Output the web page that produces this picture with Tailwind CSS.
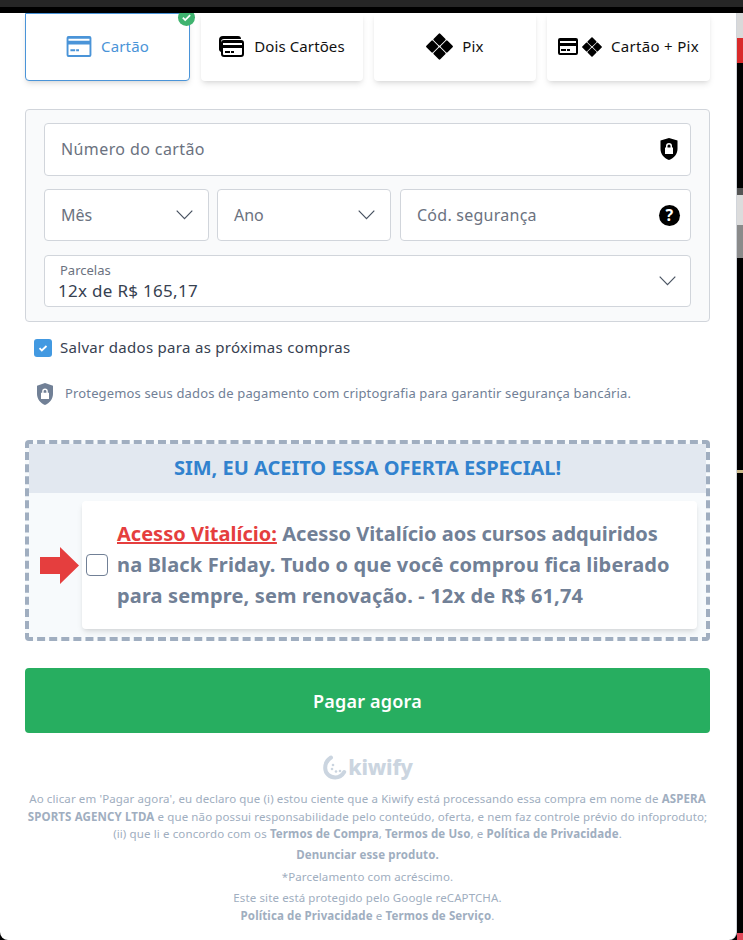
<!DOCTYPE html>
<html lang="pt-BR">
<head>
<meta charset="utf-8">
<script src="https://cdn.jsdelivr.net/npm/@tailwindcss/browser@4"></script>
</head>
<body class="bg-black font-['Noto_Sans','Open_Sans',sans-serif]">
<div class="w-[743px] h-[940px] overflow-hidden flex flex-col">
  <div class="h-[7px] bg-[#262626] shrink-0"></div>
  <div class="h-[6px] bg-black shrink-0"></div>
  <div class="flex flex-1 min-h-0">
    <main class="w-[737px] h-[927px] bg-white rounded-b-lg overflow-hidden px-[25px] relative border-r border-[#d1d5db]">
      <!-- tabs -->
      <div class="flex w-[685px] justify-between">
        <div class="relative w-[165px] h-[68px] pb-[1px] bg-white border border-[#4a94d8] rounded-b flex items-center justify-center gap-[9px] shadow-md text-[#4a94d8] text-[15px] tracking-[0.15px]">
          <svg class="w-[26px] h-[21px]" viewBox="0 0 26 22"><path fill="#4a94d8" fill-rule="evenodd" d="M2 0h22a2 2 0 0 1 2 2v18a2 2 0 0 1-2 2H2a2 2 0 0 1-2-2V2a2 2 0 0 1 2-2zm0 3v2h22V3H2zm0 6v11h22V9H2zm2 5h5v2H4v-2zm6 0h3v2h-3v-2z"/></svg>
          <span>Cartão</span>
          <span class="absolute -top-[5px] -right-[6px] w-[17px] h-[17px] rounded-full bg-[#3fb36f] flex items-center justify-center">
            <svg class="w-[11px] h-[11px]" viewBox="0 0 12 12"><path d="M2 6.200l2.600 2.600L10 3.400" fill="none" stroke="white" stroke-width="2"/></svg>
          </span>
        </div>
        <div class="w-[162px] h-[68px] pb-[1px] bg-white rounded-b flex items-center justify-center gap-[10px] shadow-md text-[#111] text-[15px] tracking-[0.1px]">
          <svg class="w-[25px] h-[21px]" viewBox="0 0 25 21"><path d="M4 0h15a3 3 0 0 1 3 3H5a3 3 0 0 0-3 3v10a3 3 0 0 1-2-3V4a4 4 0 0 1 4-4z" fill="#000"/><path fill-rule="evenodd" fill="#000" d="M5 4h17a3 3 0 0 1 3 3v11a3 3 0 0 1-3 3H5a3 3 0 0 1-3-3V7a3 3 0 0 1 3-3zm-1 3v2h19V7H4zm0 5v6a1 1 0 0 0 1 1h17a1 1 0 0 0 1-1v-6H4zm2 3h5v2H6v-2zm6 0h3v2h-3v-2z"/></svg>
          <span>Dois Cartões</span>
        </div>
        <div class="w-[162px] h-[68px] pb-[1px] bg-white rounded-b flex items-center justify-center gap-[9px] shadow-md text-[#111] text-[15px] tracking-[0.15px]">
          <svg class="w-[27px] h-[27px]" viewBox="0 0 27 27"><path fill="#000" d="M13.500 1.500l5 5-5 5-5-5zM6.200 8.500l5 5-5 5-5-5zM20.800 8.500l5 5-5 5-5-5zM13.500 15.500l5 5-5 5-5-5z" stroke="#000" stroke-width="2.200" stroke-linejoin="round"/></svg>
          <span>Pix</span>
        </div>
        <div class="w-[163px] h-[68px] pb-[1px] bg-white rounded-b flex items-center justify-center shadow-md text-[#111] text-[15px] tracking-[0.3px]">
          <svg class="w-[20px] h-[17px]" viewBox="0 0 20 17"><path fill-rule="evenodd" fill="#000" d="M2 0h16a2 2 0 0 1 2 2v13a2 2 0 0 1-2 2H2a2 2 0 0 1-2-2V2a2 2 0 0 1 2-2zm0 3v2h16V3H2zm0 5v7h16V8H2zm1 3h5v2H3v-2zm6 0h3v2H9v-2z"/></svg>
          <svg class="w-[20px] h-[20px] ml-[4px] mr-[9px]" viewBox="0 0 27 27"><path fill="#000" d="M13.500 1.500l5 5-5 5-5-5zM6.200 8.500l5 5-5 5-5-5zM20.800 8.500l5 5-5 5-5-5zM13.500 15.500l5 5-5 5-5-5z" stroke="#000" stroke-width="2.200" stroke-linejoin="round"/></svg>
          <span>Cartão + Pix</span>
        </div>
      </div>

      <!-- form -->
      <section class="mt-[28px] w-[685px] h-[213px] bg-[#f9fafb] border border-[#d1d5db] rounded pt-[13px] px-[18px] flex flex-col">
        <div class="h-[53px] pb-[2px] bg-white border border-[#d1d5db] rounded flex items-center justify-between pl-[16px] pr-[12px] text-[16px] tracking-[0.4px] text-[#6b7280]">
          <span>Número do cartão</span>
          <svg class="w-[18px] h-[22px]" viewBox="0 0 18 22"><path fill-rule="evenodd" fill="#000" d="M9 0l8.500 2.500V11c0 5-3.500 9-8.500 11C4 20 .5 16 .5 11V2.500zM9 5a3 3 0 0 0-3 3v1.500H5V16h8V9.500h-1V8a3 3 0 0 0-3-3zm0 1.500A1.500 1.500 0 0 1 10.500 8v1.500h-3V8A1.500 1.500 0 0 1 9 6.500z"/></svg>
        </div>
        <div class="flex gap-[8px] mt-[13px] h-[52px]">
          <div class="w-[165px] bg-white border border-[#d1d5db] rounded flex items-center justify-between pl-[16px] pr-[15px] text-[16px] text-[#6b7280]">
            <span>Mês</span>
            <svg class="w-[17px] h-[10px]" viewBox="0 0 17 10"><path d="M.7.7l7.800 8 7.800-8" fill="none" stroke="#4b5563" stroke-width="1.200"/></svg>
          </div>
          <div class="w-[174px] bg-white border border-[#d1d5db] rounded flex items-center justify-between pl-[16px] pr-[15px] text-[16px] text-[#6b7280]">
            <span>Ano</span>
            <svg class="w-[17px] h-[10px]" viewBox="0 0 17 10"><path d="M.7.7l7.800 8 7.800-8" fill="none" stroke="#4b5563" stroke-width="1.200"/></svg>
          </div>
          <div class="w-[291px] ml-[1px] bg-white border border-[#d1d5db] rounded flex items-center justify-between pl-[16px] pr-[10px] text-[16px] tracking-[0.25px] text-[#6b7280]">
            <span>Cód. segurança</span>
            <span class="w-[21px] h-[21px] rounded-full bg-black text-white font-bold text-[16px] leading-none flex items-center justify-center">?</span>
          </div>
        </div>
        <div class="relative mt-[14px] h-[52px] bg-white border border-[#d1d5db] rounded flex items-center justify-between pl-[13px] pr-[14px]">
          <div class="flex flex-col pt-[2px]">
            <span class="text-[13px] leading-[14px] text-[#6b7280] ml-[2px]">Parcelas</span>
            <span class="mt-[2px] text-[17px] leading-[23px] tracking-[0.3px] text-[#374151]">12x de R$ 165,17</span>
          </div>
          <svg class="w-[17px] h-[10px]" viewBox="0 0 17 10"><path d="M.7.7l7.800 8 7.800-8" fill="none" stroke="#4b5563" stroke-width="1.200"/></svg>
        </div>
      </section>

      <div class="flex items-center gap-[8px] mt-[17px] ml-[9px] h-[18px] text-[15px] tracking-[0.3px] text-[#374151]">
        <span class="w-[18px] h-[18px] rounded-[3px] bg-[#4299e1] flex items-center justify-center">
          <svg class="w-[12px] h-[12px]" viewBox="0 0 12 12"><path d="M2.500 6.200l2.300 2.300L9.500 4" fill="none" stroke="white" stroke-width="1.800"/></svg>
        </span>
        <span class="pb-[1px]">Salvar dados para as próximas compras</span>
      </div>

      <div class="flex items-center gap-[12px] mt-[26px] ml-[12px] h-[22px] text-[13px] tracking-[0.15px] text-[#718096]">
        <svg class="w-[16px] h-[22px]" viewBox="0 0 16 22"><path fill-rule="evenodd" fill="#718096" d="M8 0l8 2.800V11c0 5-3.500 9-8 11-4.500-2-8-6-8-11V2.800zM8 5.500a2.800 2.800 0 0 0-2.800 2.800v1.400H4V16h8V9.700h-1.200V8.300A2.800 2.800 0 0 0 8 5.500zm0 1.400a1.400 1.400 0 0 1 1.400 1.400v1.400H6.600V8.300A1.400 1.400 0 0 1 8 6.900z"/></svg>
        <span>Protegemos seus dados de pagamento com criptografia para garantir segurança bancária.</span>
      </div>

      <!-- offer -->
      <section class="mt-[35px] w-[685px] h-[201px] border-[4px] border-dashed border-[#a0aec0] rounded bg-[#f7fafc] flex flex-col">
        <div class="h-[49px] pb-[2px] shrink-0 bg-[#e2e8f0] flex items-center justify-center text-[20px] font-bold text-[#3182ce]">SIM, EU ACEITO ESSA OFERTA ESPECIAL!</div>
        <div class="flex items-center mt-[8px] ml-[11px]">
          <svg class="w-[40px] h-[37px] shrink-0" viewBox="0 0 40 37"><path fill="#e53e3e" d="M0 10h20V0l19 18.500L20 37V27H0z"/></svg>
          <div class="ml-[2px] w-[615px] h-[128px] bg-white rounded shadow-md flex items-center pl-[4px] pr-[20px]">
            <span class="w-[22px] h-[22px] shrink-0 bg-white border border-[#718096] rounded-[4px]"></span>
            <p class="ml-[9px] pb-[2px] text-[20px] leading-[31px] tracking-[0.15px] font-bold text-[#718096]"><span class="text-[#e53e3e] underline tracking-normal">Acesso Vitalício:</span> <span class="tracking-normal">Acesso Vitalício aos cursos adquiridos</span> na Black Friday. Tudo o que você comprou fica liberado para sempre, sem renovação. - 12x de R$ 61,74</p>
          </div>
        </div>
      </section>

      <div class="mt-[27px] w-[685px] h-[65px] pt-[1px] bg-[#27ae60] rounded flex items-center justify-center text-white font-semibold text-[18px] tracking-[0.2px]">Pagar agora</div>

      <div class="mt-[21px] h-[27px] flex items-center justify-center gap-[1px] text-[#cbd5e0]">
        <svg class="w-[24px] h-[25px]" viewBox="0 0 24 25"><path d="M8 2.500C4 5 2.200 9 2.200 13c0 5.500 4.500 9.500 10 9.500 4 0 7-2 9-5.500" fill="none" stroke="#cbd5e0" stroke-width="4" stroke-linecap="round"/><circle cx="10" cy="10" r="1.300" fill="#cbd5e0"/><circle cx="9" cy="14" r="1.300" fill="#cbd5e0"/><circle cx="13" cy="16.500" r="1.300" fill="#cbd5e0"/><circle cx="17" cy="16" r="1.300" fill="#cbd5e0"/></svg>
        <span class="text-[21px] font-extrabold leading-none tracking-[-0.2px]">kiwify</span>
      </div>

      <div class="w-[685px] mt-[9px] text-center text-[11.500px] tracking-[0.12px] text-[#a0aec0]">
        <p class="leading-[17.500px]">Ao clicar em 'Pagar agora', eu declaro que (i) estou ciente que a Kiwify está processando essa compra em nome de <b>ASPERA SPORTS AGENCY LTDA</b> e que não possui responsabilidade pelo conteúdo, oferta, e nem faz controle prévio do infoproduto; (ii) que li e concordo com os <b>Termos de Compra</b>, <b>Termos de Uso</b>, e <b>Política de Privacidade</b>.</p>
        <p class="mt-[3px] leading-[18px] font-bold">Denunciar esse produto.</p>
        <p class="mt-[4px] leading-[18px]">*Parcelamento com acréscimo.</p>
        <p class="mt-[3px] leading-[18px]">Este site está protegido pelo Google reCAPTCHA.<br><b>Política de Privacidade</b> e <b>Termos de Serviço</b>.</p>
      </div>
    </main>
    <div class="w-[6px] h-[927px] bg-black flex flex-col">
      <div class="h-[25px] bg-[#d9d9d9] shrink-0"></div>
      <div class="h-[25px] bg-[#d92a2a] shrink-0"></div>
      <div class="h-[125px] shrink-0"></div>
      <div class="h-[7px] bg-[#555] shrink-0"></div>
      <div class="h-[30px] bg-[#dcdcdc] shrink-0"></div>
      <div class="h-[33px] bg-[#8a8a8a] shrink-0"></div>
      <div class="h-[212px] shrink-0"></div>
      <div class="h-[3px] bg-[#cbb98a] shrink-0"></div>
      <div class="h-[460px] shrink-0"></div>
      <div class="h-[7px] bg-[#e3485a] shrink-0"></div>
    </div>
  </div>
</div>
</body>
</html>
